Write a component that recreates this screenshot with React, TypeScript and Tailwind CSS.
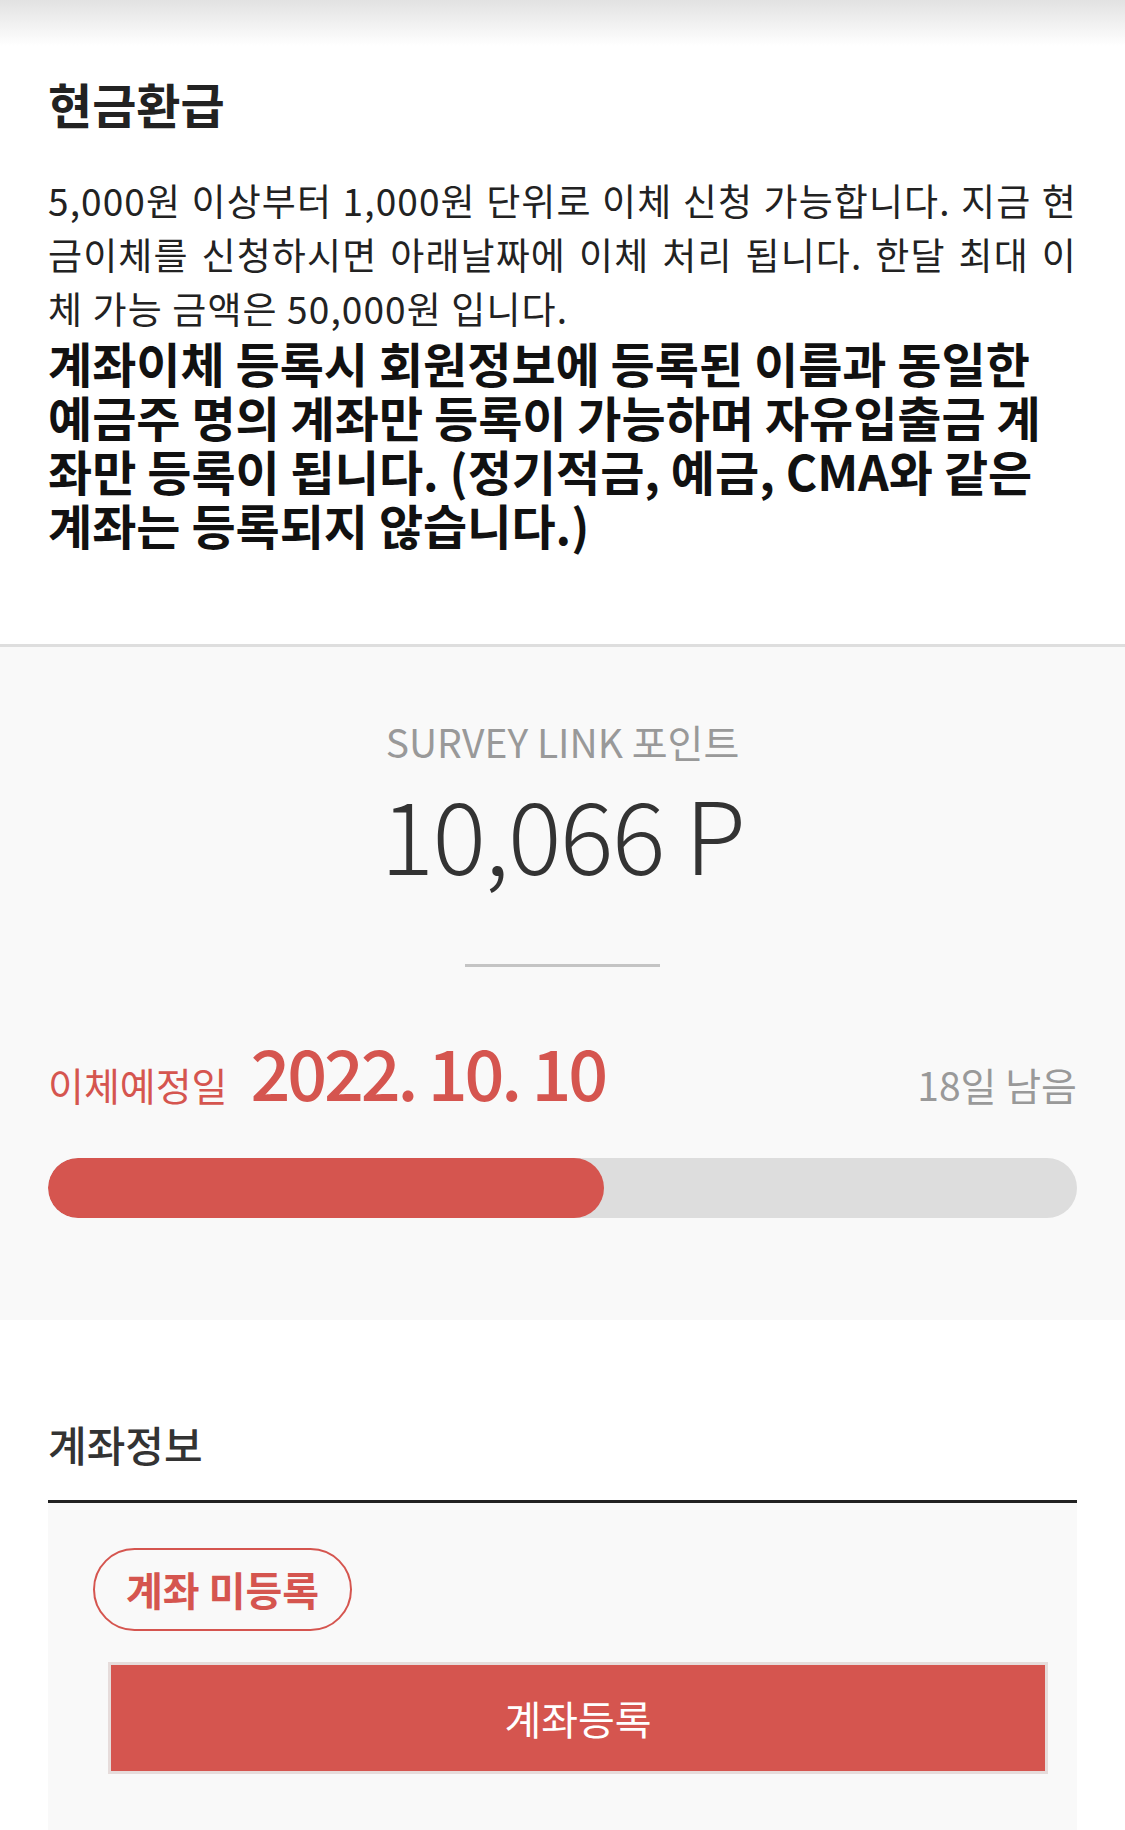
export default function App() {
  const progress = 54;

  return (
    <div
      className="min-h-[1830px] bg-white text-[#222]"
      style={{ fontFamily: '"Noto Sans CJK KR", "Noto Sans", sans-serif' }}
    >
      {/* Notice */}
      <section className="relative px-12 pt-[73px] pb-[93px]">
        <div className="absolute inset-x-0 top-0 h-[46px] bg-gradient-to-b from-[#e2e2e2] to-white" />
        <h1 className="relative text-[48px] leading-[60px] font-bold text-[#222]">현금환급</h1>
        <p className="mt-[40px] text-[37px] leading-[54px] tracking-[0.03em] text-[#222]">
          <span className="block text-justify [text-align-last:justify]">
            5,000원 이상부터 1,000원 단위로 이체 신청 가능합니다. 지금 현
          </span>
          <span className="block text-justify [text-align-last:justify]">
            금이체를 신청하시면 아래날짜에 이체 처리 됩니다. 한달 최대 이
          </span>
          <span className="block">체 가능 금액은 50,000원 입니다.</span>
        </p>
        <p className="text-[48px] leading-[54px] font-bold text-[#111]">
          계좌이체 등록시 회원정보에 등록된 이름과 동일한<br />
          예금주 명의 계좌만 등록이 가능하며 자유입출금 계<br />
          좌만 등록이 됩니다. (정기적금, 예금, CMA와 같은<br />
          계좌는 등록되지 않습니다.)
        </p>
      </section>

      {/* Points */}
      <section className="border-t-[3px] border-[#dedede] bg-[#f9f9f9] px-12 pt-[70px] pb-[102px]">
        <div className="flex flex-col items-center">
          <p className="text-[39px] leading-[48px] text-[#999]">SURVEY LINK 포인트</p>
          <p className="mt-[12px] text-[100px] leading-[110px] font-light tracking-[-0.015em] text-[#333]">
            10,066 P
          </p>
          <div className="mt-[77px] h-[3px] w-[195px] bg-[#c4c4c4]" />
        </div>

        <div className="mt-[62px] flex items-baseline justify-between">
          <div className="flex items-baseline gap-[23px] text-[#d5554f]">
            <span className="text-[39px]">이체예정일</span>
            <span className="text-[70px] leading-[84px] font-medium tracking-[-0.045em]">2022. 10. 10</span>
          </div>
          <span className="text-[39px] text-[#999]">18일 남음</span>
        </div>

        <div className="mt-[44px] h-[60px] rounded-full bg-[#dddddd] overflow-hidden">
          <div className="h-full rounded-full bg-[#d5554f]" style={{ width: `${progress}%` }} />
        </div>
      </section>

      {/* Account */}
      <section className="px-12 pt-[98px]">
        <h2 className="text-[42px] leading-[52px] font-medium text-[#333]">계좌정보</h2>
        <div className="mt-[30px] border-t-[3px] border-[#222] bg-[#f9f9f9] pt-[45px] pb-[60px]">
          <span className="ml-[45px] inline-flex h-[83px] items-center rounded-full border-2 border-[#d5554f] px-[31px] text-[40px] font-bold text-[#d5554f]">
            계좌 미등록
          </span>
          <button className="mt-[31px] ml-[60px] mr-[29px] flex h-[112px] w-[calc(100%-89px)] items-center justify-center border-[3px] border-[#e6dcdb] bg-[#d5554f] text-[40px] text-white">
            계좌등록
          </button>
        </div>
      </section>
    </div>
  );
}
